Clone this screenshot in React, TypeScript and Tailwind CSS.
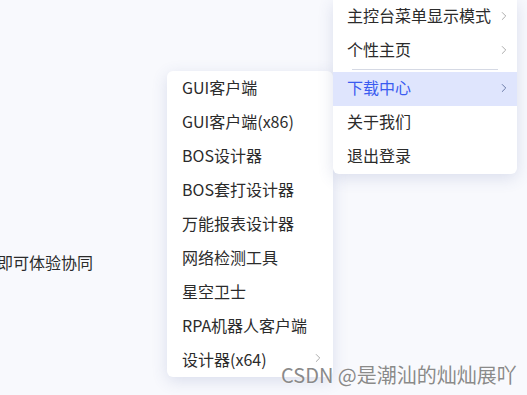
import React from 'react';
import { ChevronRight } from 'lucide-react';

const mainItems = [
  { label: '主控台菜单显示模式', arrow: true },
  { label: '个性主页', arrow: true },
  { label: '-', arrow: false },
  { label: '下载中心', arrow: true, active: true },
  { label: '关于我们', arrow: false },
  { label: '退出登录', arrow: false },
];

const subItems = [
  'GUI客户端',
  'GUI客户端(x86)',
  'BOS设计器',
  'BOS套打设计器',
  '万能报表设计器',
  '网络检测工具',
  '星空卫士',
  'RPA机器人客户端',
  '设计器(x64)',
];

export default function App() {
  return (
    <div
      className="relative w-[527px] h-[395px] overflow-hidden bg-[#f8f9fd] text-[#2b2b2b]"
      style={{ fontFamily: '"Noto Sans CJK SC", "Noto Sans", sans-serif' }}
    >
      {/* page content behind the menus */}
      <div className="pt-[250px] -ml-[3px] text-[16px] leading-[24px]">即可体验协同</div>

      {/* download submenu */}
      <ul className="absolute left-[167px] top-[71px] w-[166px] rounded-md bg-white shadow-[0_4px_16px_rgba(60,80,150,0.16)]">
        {subItems.map((label, i) => (
          <li key={label} className="flex items-center justify-between h-[34px] pl-[15px] pr-[8px] text-[16px] leading-[20px]">
            <span className="-mt-[3px]">{label}</span>
            {i === subItems.length - 1 && (
              <ChevronRight size={14} strokeWidth={1.5} className="text-[#a0a0a0] -mt-[5px]" />
            )}
          </li>
        ))}
      </ul>

      {/* user dropdown */}
      <ul className="absolute left-[333px] top-0 w-[184px] rounded-b-md bg-white shadow-[0_4px_16px_rgba(60,80,150,0.16)]">
        {mainItems.map((item, i) =>
          item.label === '-' ? (
            <li key={i} className="pt-px pb-[2px] px-[19px]">
              <div className="h-px bg-[#d5d9e4]" />
            </li>
          ) : (
            <li
              key={item.label}
              className={
                'flex items-center justify-between h-[34px] pl-[14px] pr-[6px] text-[16px] leading-[20px] ' +
                (item.active ? 'bg-[#dfe5fd] text-[#3b5cf0]' : '')
              }
            >
              <span className="-mt-[4px]">{item.label}</span>
              {item.arrow && (
                <ChevronRight
                  size={14}
                  strokeWidth={1.5}
                  className={'-mt-[2px] ' + (item.active ? 'text-[#5a6b9a]' : 'text-[#a0a0a0]')}
                />
              )}
            </li>
          )
        )}
      </ul>

      {/* watermark */}
      <div className="absolute left-[281px] top-[362px] text-[20px] leading-[26px] text-[#8a8a8a] [text-shadow:0_0_2px_#ffffff]">
        CSDN @是潮汕的灿灿展吖
      </div>
    </div>
  );
}
